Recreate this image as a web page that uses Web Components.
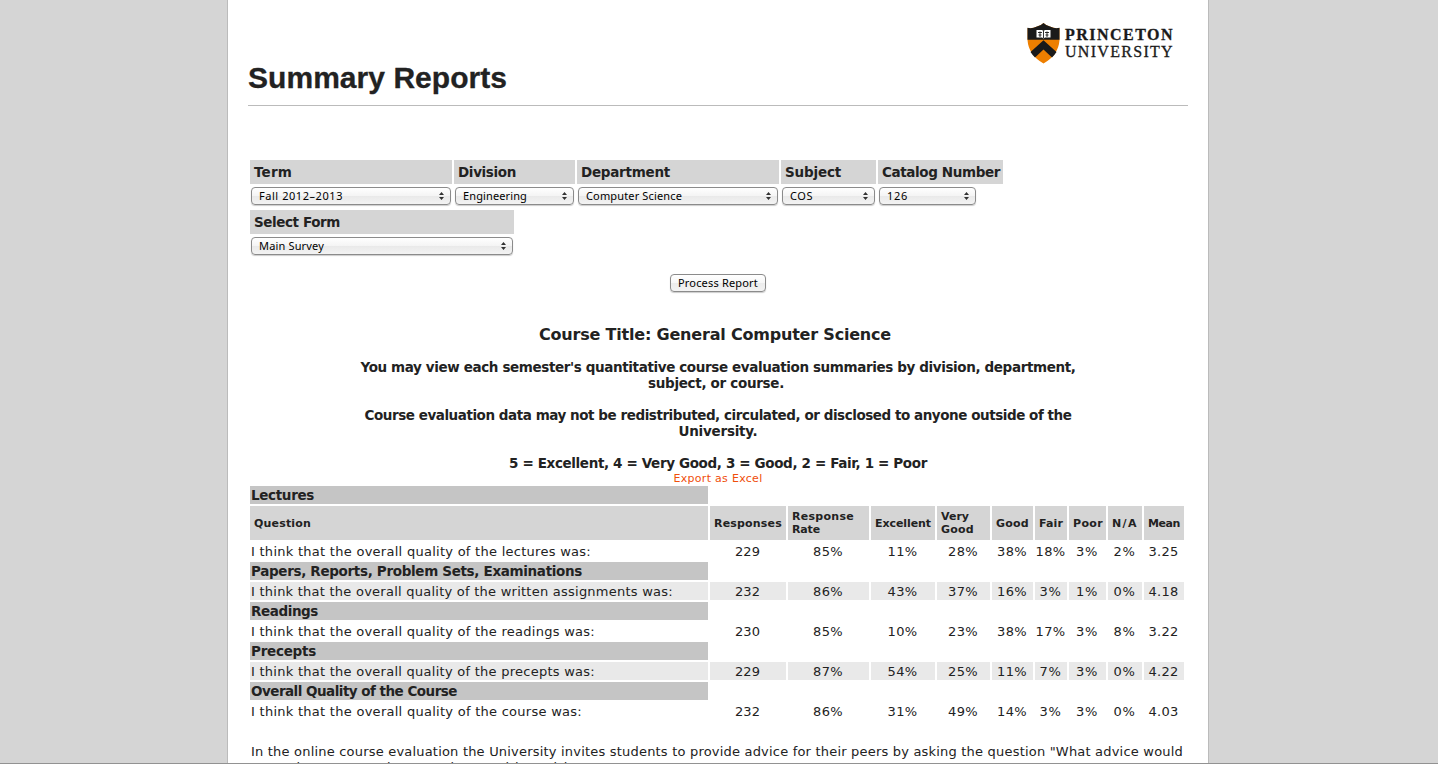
<!DOCTYPE html>
<html lang="en">
<head>
<meta charset="utf-8">
<title>Summary Reports</title>
<style>
html,body{margin:0;height:100%;overflow:hidden;background:#d5d5d5}
body{font:13px/16px "DejaVu Sans",sans-serif;color:#222}
</style>
</head>
<body>
<report-page>
  <page-header slot="header"><fit-text w="259">Summary Reports</fit-text></page-header>
  <filter-row>
    <filter-field label="Term" lw="38" value="Fall 2012–2013" vw="84" cell="202" box="200"></filter-field>
    <filter-field label="Division" lw="58" value="Engineering" vw="64" cell="121" box="119"></filter-field>
    <filter-field label="Department" lw="89" value="Computer Science" vw="96" cell="202" box="200"></filter-field>
    <filter-field label="Subject" lw="56" value="COS" vw="23" cell="95" box="93"></filter-field>
    <filter-field label="Catalog Number" lw="118" value="126" vw="21" cell="125" box="97"></filter-field>
  </filter-row>
  <filter-row>
    <filter-field label="Select Form" lw="86" value="Main Survey" vw="65" cell="264" box="262"></filter-field>
  </filter-row>
  <mac-button><fit-text w="80">Process Report</fit-text></mac-button>
  <report-intro></report-intro>
  <results-table></results-table>
  <advice-note>
    <fit-text w="932">In the online course evaluation the University invites students to provide advice for their peers by asking the question "What advice would</fit-text>
    <fit-text w="404">you give to another student taking this course?"</fit-text>
  </advice-note>
</report-page>
<script>
const define = (name, html, setup) => customElements.define(name, class extends HTMLElement {
  connectedCallback() {
    if (this.shadowRoot) return;
    const t = document.createElement('template');
    t.innerHTML = typeof html === 'function' ? html(this) : html;
    this.attachShadow({mode: 'open'}).append(t.content.cloneNode(true));
    if (setup) setup(this);
  }
});

define('report-page', `<style>
:host{display:block;width:980px;height:763px;margin-left:227px;background:#fff;border:solid #bbb;border-width:0 1px;overflow:hidden;position:relative}
main{padding:54px 20px 0 22px}
footer{position:fixed;left:0;right:0;bottom:0;height:1px;background:#929292}
</style><slot name="header"></slot><main><slot></slot></main><footer></footer>`);

define('page-header', `<style>
:host{display:flex;justify-content:space-between;height:105px;margin:0 20px;border-bottom:1px solid #bbb}
h1{margin:60px 0 0;font:bold 30px/36px "Liberation Sans",Arial,sans-serif;color:#222;-webkit-text-stroke:.3px #222}
</style><h1><slot></slot></h1><princeton-logo></princeton-logo>`);

define('princeton-logo', `<style>
:host{display:flex;gap:5px;margin:23px 14px 0 0;height:42px;color:#1a1a1a}
svg{display:block}
div{display:flex;flex-direction:column;padding-top:3px}
fit-text{font:bold 16px/17px "Liberation Serif",serif;-webkit-text-stroke:.3px}
fit-text+fit-text{font-weight:400}
</style>
<svg width="33" height="42" viewBox="0 0 33 42">
<path fill="#ee7f00" d="M.5 5Q5 6 10 3.500Q13.500 3 16.500 0Q19.500 3 23 3.500Q28 6 32.500 5V17Q31.500 32 16.500 40.500Q1.500 32 .5 17Z"/>
<path fill="#1a1a1a" d="M.5 4.800Q5 6 10 3.500Q13.500 3 16.500 0Q19.500 3 23 3.500Q28 6 32.500 4.800V16.800H.5Z"/>
<path fill="#1a1a1a" d="M16.500 17.200L29.500 29Q27.500 32 25 34.500L16.500 26.500L8 34.500Q5.500 32 3.500 29Z"/>
<path fill="#fff" d="M9.500 7H15L16.500 8L18 7H23.500V14.500H18L16.500 15.500L15 14.500H9.500Z"/>
<path fill="none" stroke="#1a1a1a" stroke-width=".9" d="M11 9.500H15M18 9.500H22M11.500 12H14.500M18.500 12H21.500M13 8.500V14M20 8.500V14M16.500 8V15"/>
</svg><div><fit-text w="109">PRINCETON</fit-text><fit-text w="109">UNIVERSITY</fit-text></div>`);

define('filter-row', `<style>:host{display:flex;gap:2px;height:50px}</style><slot></slot>`);

define('filter-field', el => { const a = k => el.getAttribute(k); return `<style>
:host{display:block;width:${a('cell')}px}
label{display:block;box-sizing:border-box;height:24px;padding:4px 4px;background:#d5d5d5;font:bold 13.5px/16px "DejaVu Sans",sans-serif}
.select{box-sizing:border-box;width:${a('box')}px;height:18px;margin:3px 0 0 1px;padding:0 6px 0 7px;display:flex;justify-content:space-between;align-items:center;border:1px solid #8b8b8b;border-radius:4px;background:linear-gradient(#fff,#f4f4f4 50%,#e9e9e9 50%,#f3f3f3);box-shadow:0 1px 1px #ccc;font:11px/16px "Noto Sans","Open Sans",sans-serif;color:#000}
</style><label><fit-text w="${a('lw')}">${a('label')}</fit-text></label>
<div class="select"><fit-text w="${a('vw')}">${a('value')}</fit-text><svg width="5" height="8" viewBox="0 0 5 8"><path fill="#333" d="M2.500 0L5 3H0ZM2.500 8L5 5H0Z"/></svg></div>`; });

define('mac-button', `<style>
:host{display:flex;justify-content:center;box-sizing:border-box;width:96px;height:18px;margin:14px auto 0 420px;border:1px solid #8b8b8b;border-radius:4px;background:linear-gradient(#fff,#f7f7f7 50%,#ececec 50%,#f3f3f3);box-shadow:0 1px 1px #ccc;font:11px/16px "Noto Sans","Open Sans",sans-serif;color:#000}
</style><slot></slot>`);

define('report-intro', `<style>
:host{display:block;width:936px;padding-top:33px;text-align:center;font:bold 13.5px/16px "DejaVu Sans",sans-serif}
h2{margin:0 6px 14px 0;font-size:16px;line-height:20px;font-weight:bold}
p{margin:0 0 16px}p:last-of-type{margin:0}
.l{margin-right:4px}
a{display:block;color:#f04e0b;font:11px/15px "DejaVu Sans",sans-serif;height:15px}
</style>
<h2><fit-text w="352">Course Title: General Computer Science</fit-text></h2>
<p><fit-text w="715">You may view each semester's quantitative course evaluation summaries by division, department,</fit-text><br><fit-text class="l" w="136">subject, or course.</fit-text></p>
<p><fit-text w="707">Course evaluation data may not be redistributed, circulated, or disclosed to anyone outside of the</fit-text><br><fit-text w="79">University.</fit-text></p>
<p><fit-text w="418">5 = Excellent, 4 = Very Good, 3 = Good, 2 = Fair, 1 = Poor</fit-text></p>
<a><fit-text w="89">Export as Excel</fit-text></a>`);

define('results-table', () => {
  const heads = [['Responses',68],['Response|Rate',62,28],['Excellent',56],['Very|Good',28,33],['Good',33],['Fair',24],['Poor',30],['N/A',26],['Mean',32]];
  const q = s => `I think that the overall quality of the ${s} was:`;
  const groups = [
    ['Lectures',63,q('lectures'),340,'229 85% 11% 28% 38% 18% 3% 2% 3.25'],
    ['Papers, Reports, Problem Sets, Examinations',331,q('written assignments'),422,'232 86% 43% 37% 16% 3% 1% 0% 4.18'],
    ['Readings',67,q('readings'),344,'230 85% 10% 23% 38% 17% 3% 8% 3.22'],
    ['Precepts',65,q('precepts'),344,'229 87% 54% 25% 11% 7% 3% 0% 4.22'],
    ['Overall Quality of the Course',206,q('course'),331,'232 86% 31% 49% 14% 3% 3% 0% 4.03']];
  const width = v => v.endsWith('%') ? (v.length === 3 ? 30 : 22) : v.includes('.') ? 30 : 25;
  return `<style>
:host{display:grid;grid-template-columns:458px 76px 81px 64px 53px 41px 32px 37px 34px 40px;gap:2px;width:934px}
div{box-sizing:border-box;height:18px;padding-top:1px;line-height:18px;white-space:nowrap;display:flex;align-items:center;justify-content:center}
.g{grid-column:1;background:#c5c5c5;font-weight:bold;font-size:13.5px;justify-content:flex-start;padding:0 0 0 1px}
.f{grid-column:2/-1}
.h{height:34px;background:#d5d5d5;font:bold 11px/13px "DejaVu Sans",sans-serif;flex-direction:column;align-items:flex-start;padding:0 0 0 4px}
.v{padding:2px 1px 0 0}
.q{justify-content:flex-start;padding:2px 0 0 1px}
.s{background:#e9e9e9}
</style>` + groups.map(([t,tw,l,lw,vals],i) => `<div class="g"><fit-text w="${tw}">${t}</fit-text></div><div class="f"></div>` +
    (i ? '' : `<div class="h"><fit-text w="57">Question</fit-text></div>` + heads.map(([h,...ws]) => `<div class="h">${h.split('|').map((p,j) => `<fit-text w="${ws[j]}">${p}</fit-text>`).join('')}</div>`).join('')) +
    `<div class="q ${i%2?'s':''}"><fit-text w="${lw}">${l}</fit-text></div>` +
    vals.split(' ').map(v => `<div class="v ${i%2?'s':''}"><fit-text w="${width(v)}">${v}</fit-text></div>`).join('')).join('');
});

define('advice-note', `<style>:host{display:flex;flex-direction:column;padding:24px 0 0 1px}</style><slot></slot>`);

/* A single line of text tracked out or in to a given measure.
   Registered last, so that every host font is in place when it measures. */
define('fit-text', `<style>:host{display:inline-block;white-space:nowrap}span{display:inline-block}</style><span><slot></slot></span>`, el => {
  const span = el.shadowRoot.querySelector('span');
  const w = +el.getAttribute('w'), n = el.textContent.length;
  span.style.letterSpacing = '0';
  const s = (w - span.getBoundingClientRect().width) / n;
  span.style.letterSpacing = s.toFixed(3) + 'px';
});
</script>
</body>
</html>
